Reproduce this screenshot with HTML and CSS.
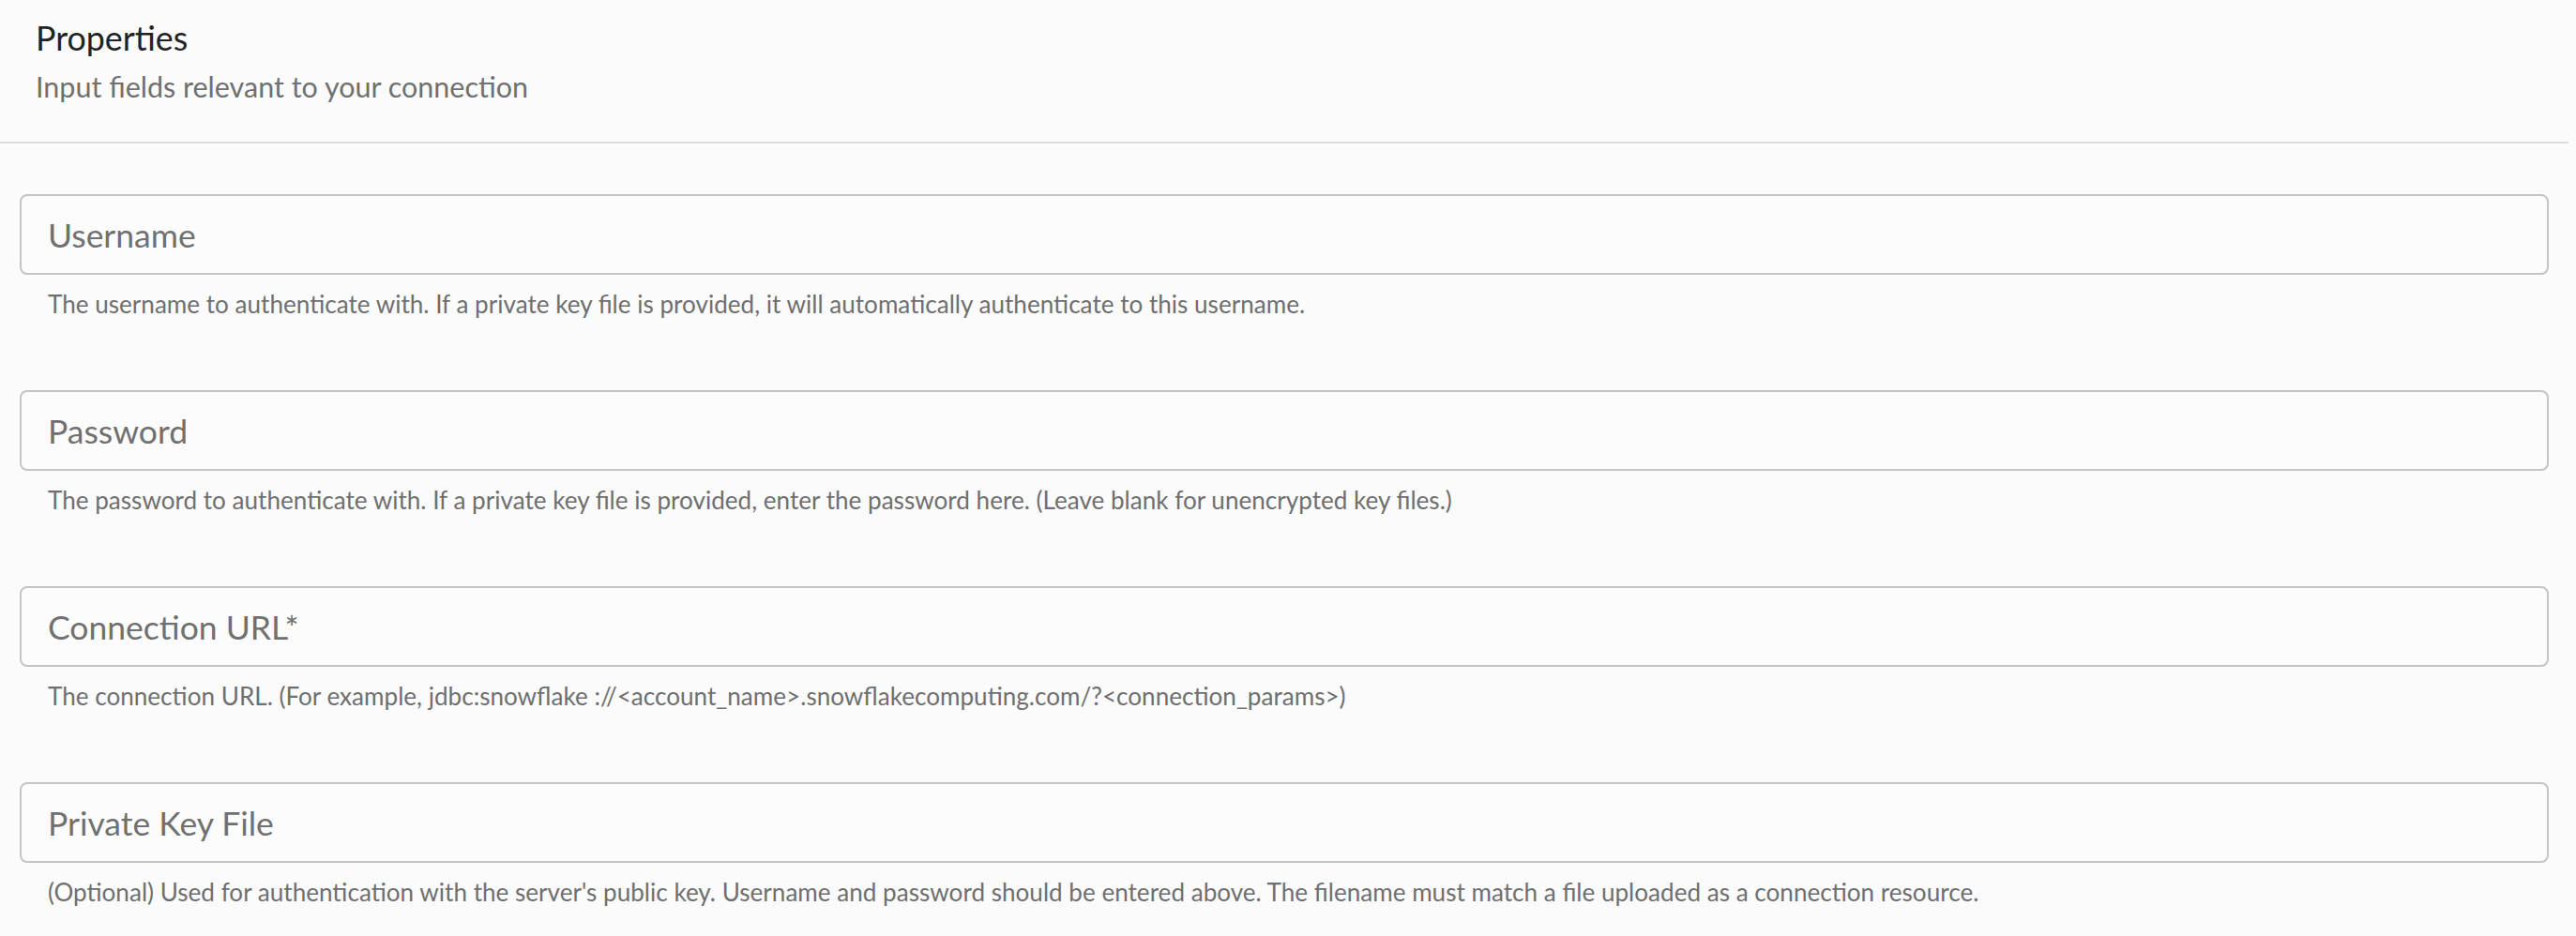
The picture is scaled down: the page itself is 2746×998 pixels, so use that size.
FILE: index.html
```html
<!DOCTYPE html>
<html lang="en">
<head>
<meta charset="utf-8">
<title>Properties</title>
<link rel="stylesheet" href="styles.css">
</head>
<body>
<div class="page">
  <header class="header">
    <h1 class="title">Properties</h1>
    <p class="subtitle">Input fields relevant to your connection</p>
  </header>
  <form class="fields">
    <div class="field">
      <input class="field-input" type="text" placeholder="Username">
      <p class="field-help">The username to authenticate with. If a private key file is provided, it will automatically authenticate to this username.</p>
    </div>
    <div class="field">
      <input class="field-input" type="password" placeholder="Password">
      <p class="field-help">The password to authenticate with. If a private key file is provided, enter the password here. (Leave blank for unencrypted key files.)</p>
    </div>
    <div class="field">
      <input class="field-input" type="text" placeholder="Connection URL*">
      <p class="field-help">The connection URL. (For example, jdbc:snowflake ://&lt;account_name&gt;.snowflakecomputing.com/?&lt;connection_params&gt;)</p>
    </div>
    <div class="field">
      <input class="field-input" type="text" placeholder="Private Key File">
      <p class="field-help">(Optional) Used for authentication with the server's public key. Username and password should be entered above. The filename must match a file uploaded as a connection resource.</p>
    </div>
  </form>
</div>
</body>
</html>
```

FILE: styles.css
```css
html, body {
  margin: 0;
  padding: 0;
  background: #fbfbfb;
}

body {
  font-family: Lato, "Open Sans", "Liberation Sans", sans-serif;
  color: #222222;
}

.page {
  width: 2738px;
}

.header {
  padding: 19px 38px 0;
  height: 132px;
  border-bottom: 2px solid #dcdcdc;
  box-sizing: content-box;
}

.title {
  margin: 0;
  font-size: 35.8px;
  font-weight: 400;
  line-height: 44px;
  color: #222222;
}

.subtitle {
  margin: 9px 0 0;
  font-size: 30.5px;
  font-weight: 400;
  line-height: 40px;
  color: #707070;
}

.fields {
  display: flex;
  flex-direction: column;
  gap: 73px;
  padding: 54px 21px 0;
}

.field {
  display: flex;
  flex-direction: column;
}

.field-input {
  box-sizing: border-box;
  width: 100%;
  height: 86px;
  margin: 0;
  padding: 0 28px;
  border: 2px solid #c4c4c4;
  border-radius: 8px;
  background: #fcfcfc;
  font-family: Lato, "Open Sans", "Liberation Sans", sans-serif;
  font-size: 35.5px;
  color: #222222;
  outline: none;
}

.field-input::placeholder {
  color: #707070;
  opacity: 1;
}

.field-help {
  margin: 13px 0 0;
  padding: 0 30px;
  font-size: 26.1px;
  line-height: 37px;
  color: #6f6f6f;
}
```
